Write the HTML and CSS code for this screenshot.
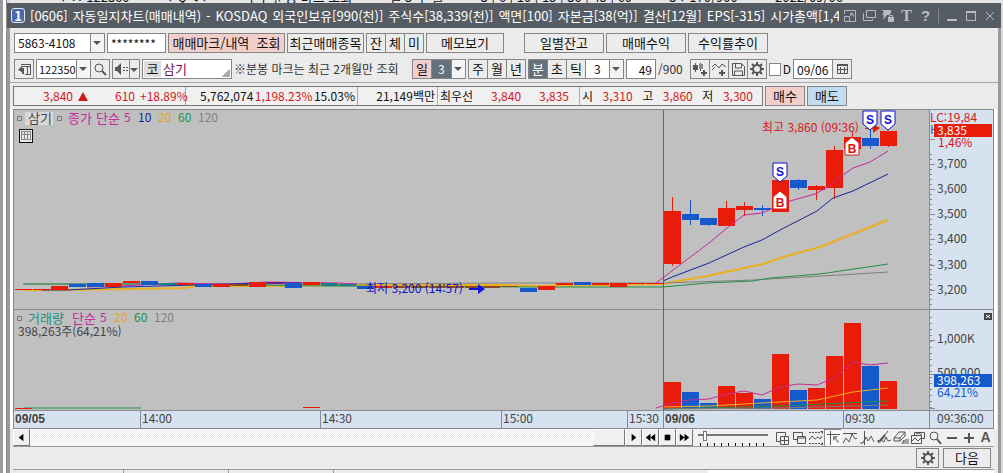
FILE: index.html
```html
<!DOCTYPE html>
<html lang="ko">
<head>
  <meta charset="UTF-8">
  <meta name="viewport" content="width=device-width, initial-scale=1.0">
  <title>[0606] 자동일지차트</title>
  <link rel="stylesheet" href="styles.css">
</head>
<body>
  <div class="behind"><span>▾ ㅅ 122360</span><span>▾ Q ◂ ▾</span><span>ㅣㅣ 분봉 마크 조회</span><span>일 3 주 월</span><span>3 | 6 | 10 | 15 | 30 | 45 | 60</span><span>3 ▾ 170/900</span><span>2022/09/06</span></div>
  <div class="window">
    <header class="titlebar">
      <span class="app-no">1</span>
      <h1 class="title">
        <span>[0606]</span><span>자동일지차트(매매내역)</span><span>-</span><span>KOSDAQ</span><span>외국인보유[990(천)]</span><span>주식수[38,339(천)]</span><span>액면[100]</span><span>자본금[38(억)]</span><span>결산[12월]</span><span>EPS[-315]</span><span>시가총액[1,456(억)]</span>
      </h1>
      <div class="win-btns">
        <button aria-label="축소"><svg viewBox="0 0 16 16"><path d="M2.5 6V2.5h11v11H8M2.5 8.5h5v5h-5zM8 8l3-3M8 5.5h3v3"/></svg></button>
        <button aria-label="복제"><svg viewBox="0 0 16 16"><path d="M5.5 2.5h9v7h-9zM3 5.5h-.5v7h9V11"/></svg></button>
        <button aria-label="잠금"><svg viewBox="0 0 16 16"><path class="fill" d="M2 2h9v3l-2 2H7l-4 5 1-5H2l2-3zM8 9h6v5H8z"/><path d="M9.5 9V7.5h3V9"/></svg></button>
        <button class="serif" aria-label="글꼴">T</button>
        <button class="help" aria-label="도움말">?</button>
        <i class="bar"></i>
        <button aria-label="최소화"><svg viewBox="0 0 16 16"><path class="thick" d="M3 12h10"/></svg></button>
        <button aria-label="최대화"><svg viewBox="0 0 16 16"><path d="M3.5 4.5h9v8h-9z"/><path class="thick" d="M3 4h10"/></svg></button>
        <button aria-label="닫기"><svg viewBox="0 0 16 16"><path d="M4 4l8 8M12 4l-8 8"/></svg></button>
      </div>
    </header>

    <main class="content">
      <div class="toolbar">
        <div class="row">
          <label class="combo account"><select aria-label="계좌번호"><option>5863-4108</option></select></label>
          <input class="box pass" type="text" value="********" aria-label="비밀번호">
          <button class="btn w-117 pink">매매마크/내역 &nbsp;조회</button>
          <button class="btn w-76">최근매매종목</button>
          <div class="group"><button class="btn">잔</button><button class="btn">체</button><button class="btn">미</button></div>
          <button class="btn w-78">메모보기</button>
          <button class="btn w-80 push">일별잔고</button>
          <button class="btn w-80">매매수익</button>
          <button class="btn w-80">수익률추이</button>
        </div>
        <div class="row">
          <button class="btn" aria-label="종목창"><svg viewBox="0 0 16 16"><path d="M5 3.5h9.5v10H9M11.5 5v8M5 5.5h9"/><path class="fill" d="M2 9l4-4v2h2v6H6v-2z"/></svg></button>
          <div class="group">
            <label class="combo code"><select aria-label="종목코드"><option>122350</option></select></label>
            <button class="btn" aria-label="검색"><svg viewBox="0 0 16 16"><circle cx="7" cy="7" r="4"/><path class="thick" d="M10 10l4 4"/></svg></button>
          </div>
          <div class="group">
            <button class="btn w-18" aria-label="소리"><svg viewBox="0 0 16 16"><path class="fill" d="M2 6h2l4-4v12l-4-4H2z"/><path stroke-dasharray="2 1" d="M10 6.5h5M10 9.5h5"/></svg></button>
            <button class="btn w-11 drop" aria-label="소리 설정"></button>
          </div>
          <div class="name-box"><span class="market">코</span><input type="text" value="삼기" aria-label="종목명"></div>
          <span class="note">※분봉 마크는 최근 2개월만 조회</span>
          <div class="group">
            <button class="btn pink">일</button>
            <label class="combo day"><select aria-label="일수"><option>3</option></select></label>
          </div>
          <div class="group"><button class="btn">주</button><button class="btn">월</button><button class="btn">년</button></div>
          <div class="group">
            <button class="btn dark">분</button><button class="btn">초</button><button class="btn">틱</button>
            <label class="combo min"><select aria-label="분 단위"><option>3</option></select></label>
          </div>
          <input class="box count" type="text" value="49" aria-label="봉 개수">
          <span class="total">/900</span>
          <div class="group">
            <button class="btn" aria-label="차트 추가"><svg viewBox="0 0 16 16"><path d="M3.5 2v9M8.5 2v8"/><path class="fill" d="M1 4h5v5H1z"/><path class="fill soft" d="M7 3h4v5H7z"/><path class="thick" d="M9 12h6M12 9v6"/></svg></button><button class="btn" aria-label="지표 추가"><svg viewBox="0 0 16 16"><path d="M1 6l3-3 4 4 3-4 4 3M1 9l3-3"/><path class="thick" d="M8 12h6M11 9v6"/></svg></button><button class="btn" aria-label="저장"><svg viewBox="0 0 16 16"><path d="M2.5 2.5h9l3 3v9h-12zM5.5 3v4h6V3M4.5 14v-4h8v4"/></svg></button><button class="btn" aria-label="설정"><svg viewBox="0 0 16 16"><circle class="thick" cx="8" cy="8" r="4"/><path class="cog" d="M8 1v3M8 12v3M1 8h3M12 8h3M3 3l2 2M11 11l2 2M13 3l-2 2M5 11l-2 2"/></svg></button>
          </div>
          <label class="check"><input type="checkbox">D</label>
          <div class="group">
            <input class="box date" type="text" value="09/06" aria-label="날짜">
            <button class="btn" aria-label="달력"><svg viewBox="0 0 16 16"><path d="M3.5 4.5h10v8h-10zM3 8.5h11M6.5 6v7M10.5 6v7"/><path class="thick" d="M3 4h11"/></svg></button>
          </div>
        </div>
      </div>

      <div class="quote">
        <div class="cells">
          <div class="cell c1"><b>3,840</b><i class="up"></i><b>610</b><b>+18.89%</b></div>
          <div class="cell c2"><span>5,762,074</span><b>1,198.23%</b><span>15.03%</span></div>
          <div class="cell c3"><span>21,149백만</span></div>
          <div class="cell c4"><span>최우선</span><b>3,840</b><b>3,835</b></div>
          <div class="cell c5"><span>시</span><b>3,310</b><span>고</span><b>3,860</b><span>저</span><b>3,300</b></div>
        </div>
        <button class="btn w-40 pink">매수</button>
        <button class="btn w-40 blue">매도</button>
      </div>

      <section class="chart">
        <svg id="chart" viewBox="14 110 979 318">
          <rect class="pane" x="14" y="110" width="915" height="300"/>
          <rect class="axis" x="929" y="110" width="64" height="318"/>
          <rect class="axis" x="14" y="411" width="979" height="17"/>
          <g id="bars"></g>
          <path class="rule" d="M14 309.5H993M14 410.5H993M929.5 110V428M140.5 411V428M320.5 411V428M501.5 411V428M627.5 411V428M663.5 411V428M843.5 411V428"/>
          <g id="lines"></g>
          <rect class="day-line" x="663" y="110" width="1" height="300"/>
          <g id="ticks"></g>

          <g class="legend">
            <path class="handle" d="M17.5 116.5h4v4h-4zM57.5 116.5h4v4h-4zM17.5 316.5h4v4h-4z"/>
            <rect class="name-bg" x="25" y="112" width="28" height="13"/>
            <text class="word" x="28" y="123">삼기</text>
            <text class="word ma5" x="68" y="123">종가</text>
            <text class="word ma5" x="96" y="123">단순</text>
            <text class="ma5" x="124" y="122">5</text>
            <text class="ma10" x="138" y="122">10</text>
            <text class="ma20" x="158" y="122">20</text>
            <text class="ma60" x="178" y="122">60</text>
            <text class="ma120" x="198" y="122">120</text>
            <text class="word vol" x="28" y="323">거래량</text>
            <text class="word ma5" x="72" y="323">단순</text>
            <text class="ma5" x="100" y="322">5</text>
            <text class="ma20" x="114" y="322">20</text>
            <text class="ma60" x="134" y="322">60</text>
            <text class="ma120" x="154" y="322">120</text>
            <text x="18" y="336">398,263주(64,21%)</text>
          </g>
          <rect class="grid-icon" x="19" y="129" width="14" height="14"/>
          <rect class="grid-bg" x="20" y="130" width="12" height="12"/>
          <path class="grid-lines" d="M21 131.5h10M21 134.5h10M21 139.5h10M21.5 131v9M24.5 131v9M27.5 131v9M30.5 131v9"/>

          <text class="low" x="366" y="293">최저 3,200 (14:57)</text>
          <path class="low-arrow" d="M469 288h9v-4l7 5-7 5v-4h-9z"/>
          <text class="high" x="762" y="132">최고 3,860 (09:36)</text>
          <path class="high-arrow" d="M865 128h8v-4l7 4-7 5v-4h-8z"/>
          <g id="marks"></g>

          <g class="prices">
            <text x="937" y="168">3,700</text>
            <text x="937" y="193">3,600</text>
            <text x="937" y="218">3,500</text>
            <text x="937" y="243">3,400</text>
            <text x="937" y="269">3,300</text>
            <text x="937" y="294">3,200</text>
            <text x="937" y="343">1,000K</text>
            <text x="937" y="377">500,000</text>
            <text class="high" x="930" y="122">LC:19,84</text>
            <text class="blue-txt" x="930" y="134">H</text>
            <text class="high" x="938" y="147">1,46%</text>
            <text class="blue-txt" x="937" y="397">64,21%</text>
          </g>
          <rect class="up-bar" x="934" y="124" width="58" height="13"/>
          <text class="tag" x="937" y="135">3,835</text>
          <rect class="down-bar" x="934" y="374" width="58" height="13"/>
          <text class="tag" x="937" y="385">398,263</text>
          <rect class="close" x="984" y="313" width="8" height="7"/>
          <path class="close-x" d="M986 315l4 3M990 315l-4 3"/>

          <g class="times">
            <text class="bold" x="15" y="423">09/05</text>
            <text x="142" y="423">14:00</text>
            <text x="322" y="423">14:30</text>
            <text x="503" y="423">15:00</text>
            <text x="629" y="423">15:30</text>
            <text class="bold" x="665" y="423">09/06</text>
            <text x="845" y="423">09:30</text>
            <text x="937" y="423">09:36:00</text>
          </g>
        </svg>
      </section>

      <div class="player">
        <button class="key" aria-label="왼쪽"><svg viewBox="0 0 16 16"><path class="fill" d="M10 4v8L5 8z"/></svg></button>
        <div class="track"><div class="thumb"></div></div>
        <button class="key" aria-label="오른쪽"><svg viewBox="0 0 16 16"><path class="fill" d="M6 4v8l5-4z"/></svg></button>
        <button class="key" aria-label="뒤로"><svg viewBox="0 0 16 16"><path class="fill" d="M8 4v8L3 8zM13 4v8L8 8z"/></svg></button>
        <button class="key" aria-label="정지"><svg viewBox="0 0 16 16"><path class="fill" d="M5 5h6v6H5z"/></svg></button>
        <button class="key" aria-label="앞으로"><svg viewBox="0 0 16 16"><path class="fill" d="M3 4v8l5-4zM8 4v8l5-4z"/></svg></button>
        <input class="speed" type="range" min="0" max="100" value="7" aria-label="속도">
        <div class="tools">
          <button aria-label="창 추가"><svg viewBox="0 0 16 16"><path d="M7 11.5H2.5v-9h9V6M6.5 6.5h8v8h-8zM10.5 7v7M7 10.5h7"/></svg></button>
          <button aria-label="창 겹치기"><svg viewBox="0 0 16 16"><path d="M6 9.5H2.5v-7h9V6M6.5 6.5h8v7h-8zM7 8h7"/></svg></button>
          <button aria-label="구간"><svg viewBox="0 0 16 16"><path stroke-dasharray="2 1" d="M1 2.5h12M1 13.5h12"/><path d="M1 10l3-4 3 3 3-2 2 2 2-3"/><path class="fill" d="M12 1h3v3zM12 15h3v-3z"/></svg></button>
          <button class="on" aria-label="십자선"><svg viewBox="0 0 16 16"><path d="M2 4.5h13M5.5 1v14"/><path class="fill soft" d="M8 6h5l-2 2 3 4-1 1-3-4-2 2z"/></svg></button>
          <button aria-label="수평선"><svg viewBox="0 0 16 16"><path d="M1 3.5h14M1 13l3-5 3 4 3-8 3 5 2-1"/></svg></button>
          <button aria-label="수직선"><svg viewBox="0 0 16 16"><path d="M5.5 1v14M1 13h3l3-6 2 4 3-5 3 6"/></svg></button>
          <button aria-label="추세선"><svg viewBox="0 0 16 16"><path d="M2 13L12 1M1 11l4-1 3 2 2-5 2 4 3-1"/><path class="thick" d="M3 12l6-7"/></svg></button>
          <button aria-label="모두 지우기"><svg viewBox="0 0 16 16"><path d="M1 8l5-6h6l-5 6zM1 8v3h6V8M7 11l5-5V2M9 14l2-4v4M13 9v5M15 9v5"/></svg></button>
          <button aria-label="차트 겹치기"><svg viewBox="0 0 16 16"><path d="M4.5 5V2.5h10v6h-3M1.5 5.5h10v8h-10zM6 4l3-1 3 2M2 11l3-3 3 3 4-4"/></svg></button>
          <button aria-label="확대경"><svg viewBox="0 0 16 16"><circle cx="7" cy="6" r="4"/><path class="thick" d="M10 9l4 5"/></svg></button>
          <button aria-label="축소"><svg viewBox="0 0 16 16"><path class="thick" d="M3 8h10"/></svg></button>
          <button aria-label="확대"><svg viewBox="0 0 16 16"><path class="thick" d="M3 8h10M8 3v10"/></svg></button>
          <button class="auto">A</button>
        </div>
      </div>

      <footer class="footer">
        <button class="btn w-23" aria-label="환경설정"><svg viewBox="0 0 16 16"><circle class="thick" cx="8" cy="8" r="4"/><path class="cog" d="M8 1v3M8 12v3M1 8h3M12 8h3M3 3l2 2M11 11l2 2M13 3l-2 2M5 11l-2 2"/></svg></button>
        <button class="btn w-48">다음</button>
      </footer>
      <div class="tabs"><i></i><i></i><i></i><i class="wide"></i></div>
    </main>
  </div>

  <script>
    const NS = 'http://www.w3.org/2000/svg';

    function add(parent, tag, attrs, text) {
      const el = document.createElementNS(NS, tag);
      for (const key in attrs) el.setAttribute(key, attrs[key]);
      if (text) el.textContent = text;
      document.getElementById(parent).appendChild(el);
    }

    // direction, body top, body bottom, wick top, wick bottom, volume top
    const candles = [
      ['up', 211, 264, 197, 266, 382],
      ['down', 214, 220, 200, 225, 392],
      ['down', 218, 225, 218, 226, 403],
      ['up', 208, 226, 201, 226, 386],
      ['up', 206, 210, 202, 216, 393],
      ['down', 208, 210, 205, 216, 399],
      ['up', 180, 212, 178, 212, 354],
      ['down', 180, 188, 179, 190, 390],
      ['up', 186, 190, 185, 200, 388],
      ['up', 150, 188, 146, 199, 356],
      ['up', 137, 149, 132, 149, 323],
      ['down', 138, 146, 130, 149, 366],
      ['up', 131, 146, 131, 147, 381]
    ];
    candles.forEach(([dir, top, bottom, high, low, vol], i) => {
      const x = 664 + i * 18;
      add('bars', 'rect', { class: dir + '-bar', x: x + 8, y: high, width: 1, height: low - high });
      add('bars', 'rect', { class: dir + '-bar', x: x, y: top, width: 17, height: bottom - top });
      add('bars', 'rect', { class: dir + '-bar', x: x, y: vol, width: 17, height: 409 - vol });
    });

    // previous day: class, x, top, height
    const flat = [
      ['up', 15, 289, 1], ['up', 33, 289, 1], ['up', 51, 286, 4], ['down', 69, 284, 3],
      ['down', 87, 283, 4], ['up', 105, 283, 4], ['up', 123, 281, 2], ['down', 141, 281, 4],
      ['teal', 159, 283, 2], ['up', 177, 283, 2], ['down', 195, 284, 3], ['up', 213, 284, 3],
      ['brown', 231, 284, 2], ['up', 249, 282, 5], ['purple', 267, 282, 2], ['down', 285, 283, 5],
      ['up', 303, 282, 3], ['teal', 321, 283, 3], ['teal', 339, 284, 2], ['down', 357, 286, 3],
      ['up', 375, 286, 2], ['brown', 393, 286, 2], ['brown', 411, 286, 2], ['brown', 429, 286, 2],
      ['brown', 447, 286, 2], ['brown', 465, 286, 2], ['brown', 483, 286, 2], ['brown', 501, 286, 1],
      ['down', 520, 288, 4], ['up', 538, 286, 4], ['up', 556, 283, 2], ['down', 574, 282, 3],
      ['up', 592, 283, 2], ['up', 610, 283, 4], ['up', 628, 283, 1], ['up', 646, 283, 1],
      ['up', 15, 408, 1], ['up', 303, 407, 1]
    ];

    const lines = [
      ['ma20 bold-line', '25,290 60,290 130,289 185,288 195,286 260,286 357,285 500,285 540,286 663,284'],
      ['ma20 bold-line', '663,284 673,282 707,276 763,264 783,257 820,247 888,220'],
      ['ma120', '24,284 340,284 500,283 663,283 753,280 840,275 888,272'],
      ['ma60', '23,284 33,284 160,284 330,286 530,287 663,287 707,283 753,281 770,278 820,274 847,270 888,264'],
      ['ma5', '87,287 120,286 177,283 230,284 267,282 340,283 357,284'],
      ['ma10', '42,290 68,290 123,287 158,286 267,283 300,283'],
      ['ma5', '656,283 681,264 709,243 727,228 744,215 762,213 790,201 815,194 826,188 843,175 853,168 870,162 888,151'],
      ['ma10', '663,281 672,277 709,263 744,247 762,240 780,230 817,211 833,198 853,191 888,174'],
      ['ma5', '656,408 672,403 690,400 709,399 727,394 744,391 762,395 780,387 798,384 817,385 834,378 853,362 870,365 888,363'],
      ['ma20', '663,407 709,406 762,403 817,400 853,392 888,388'],
      ['ma60', '24,408 141,408'],
      ['ma60', '663,409 780,406 888,401'],
      ['ma120', '663,409 780,408 888,405']
    ];
    lines.forEach(([cls, points]) => add('lines', 'polyline', { class: cls + ' line', points: points }));
    flat.forEach(([dir, x, y, h]) => add('lines', 'rect', { class: dir + '-bar', x: x, y: y, width: 17, height: h }));
    add('lines', 'polyline', { class: 'ma20 line bold-line', points: '374,285 501,285' });

    for (let y = 154; y < 306; y += 5) add('ticks', 'rect', { x: 930, y: y, width: 2, height: 1 });
    for (let y = 317; y < 410; y += 6) add('ticks', 'rect', { x: 930, y: y, width: 2, height: 1 });
    [139, 164, 189, 214, 239, 265, 290, 340, 374, 408].forEach(y => add('ticks', 'rect', { x: 930, y: y, width: 5, height: 1 }));

    // trade marks: S hangs above the bar, B sits under it
    [[780, 163], [870, 111], [888, 111]].forEach(([x, y]) => {
      add('marks', 'path', { class: 'sell', d: `M${x - 7} ${y}h14v13l-7 6-7-6z` });
      add('marks', 'text', { class: 'sell-txt', x: x, y: y + 13 }, 'S');
    });
    [[780, 191], [852, 137]].forEach(([x, y]) => {
      add('marks', 'path', { class: 'buy', d: `M${x - 7} ${y + 6}l7-6 7 6v12h-14z` });
      add('marks', 'text', { class: 'buy-txt', x: x, y: y + 16 }, 'B');
    });
  </script>
</body>
</html>
```
FILE: styles.css
```css
* {
  box-sizing: border-box;
}
body {
  margin: 0;
  min-height: 100vh;
  display: flex;
  flex-direction: column;
  background: linear-gradient(90deg, #9c9c9c 3px, #fff 3px, #fff 6px, #8c8c8c 6px, #8c8c8c 7px, #d8d8d8 7px);
  font-family: "Noto Sans CJK KR", sans-serif;
  font-size: 13px;
  line-height: 16px;
  color: #111;
}
button, input, select {
  font: inherit;
  color: inherit;
  margin: 0;
}
input, select {
  font-size: 12px;
}
button {
  padding: 0;
  cursor: pointer;
}
svg {
  fill: none;
  stroke: #555;
}
button svg {
  display: block;
  width: 16px;
  height: 16px;
  margin: 0 auto;
}
.fill {
  fill: #555;
  stroke: none;
}
.soft {
  fill: #888;
}
.thick {
  stroke-width: 2;
}
.cog {
  stroke-width: 2;
}

/* window behind */
.behind {
  height: 3px;
  margin-left: 10px;
  display: flex;
  justify-content: space-between;
  align-items: flex-end;
  overflow: hidden;
  background: #e6e6e6;
  line-height: 12px;
  padding: 0 160px 0 50px;
  white-space: nowrap;
}

.window {
  flex: 1;
  display: flex;
  flex-direction: column;
  margin: 0 2px 0 7px;
}
.titlebar {
  height: 25px;
  display: flex;
  align-items: center;
  background: #565c64;
  color: #fff;
  padding: 0 3px 0 4px;
}
.app-no {
  width: 14px;
  height: 15px;
  margin-right: 5px;
  border: 1px solid #dfe6f5;
  border-radius: 3px;
  background: #4a68b0;
  text-align: center;
  font-weight: bold;
  line-height: 13px;
}
.title {
  flex: 1;
  min-width: 0;
  display: flex;
  gap: 5px;
  margin: 0;
  overflow: hidden;
  white-space: nowrap;
  font-size: 13px;
  font-weight: normal;
}
.title span {
  flex: none;
}
.win-btns {
  flex: none;
  display: flex;
  align-items: center;
  gap: 2px;
  padding-left: 2px;
}
.win-btns button {
  width: 17px;
  height: 18px;
  border: none;
  background: none;
  color: #b8bcc2;
}
.win-btns svg {
  stroke: #b8bcc2;
}
.win-btns .fill {
  fill: #b8bcc2;
}
.win-btns .serif {
  font: bold 16px/18px "Liberation Serif", serif;
}
.win-btns .help {
  font: bold 15px/18px "Liberation Sans", sans-serif;
}
.bar {
  width: 1px;
  height: 14px;
  margin: 0 2px;
  background: #858b93;
}

.content {
  flex: 1;
  display: flex;
  flex-direction: column;
  border: solid #9a9a9a;
  border-width: 0 3px;
  background: #ebebeb;
}
.toolbar {
  display: flex;
  flex-direction: column;
  gap: 6px;
  padding: 5px 4px 3px;
  border-bottom: 1px solid #a8a8a8;
}
.row {
  display: flex;
  align-items: center;
  gap: 2px;
  height: 20px;
}
.row > * {
  flex: none;
}
.btn {
  flex: none;
  width: 20px;
  height: 20px;
  border: 1px solid #858585;
  background: #ececec;
  line-height: 16px;
  white-space: nowrap;
}
.group {
  display: flex;
}
.group > * + * {
  margin-left: -1px;
}
.w-11 { width: 11px; }
.w-18 { width: 18px; }
.w-23 { width: 23px; }
.w-40 { width: 40px; }
.w-48 { width: 48px; }
.w-76 { width: 77px; }
.w-78 { width: 78px; }
.w-80 { width: 80px; }
.w-117 { width: 117px; }
.push {
  margin-left: 18px;
}
.pink {
  background: #f3cfcb;
}
.blue {
  background: #c3dcf3;
}
.dark {
  background: #64707c;
  color: #fff;
}
.box {
  height: 20px;
  border: 1px solid #858585;
  background: #fff;
  padding: 0 3px;
  outline: none;
}
.combo {
  position: relative;
  display: block;
}
.combo select {
  appearance: none;
  display: block;
  width: 100%;
  height: 20px;
  padding: 0 14px 0 3px;
  border: 1px solid #858585;
  border-radius: 0;
  background:
    linear-gradient(#858585, #858585) right 13px top / 1px 100% no-repeat,
    linear-gradient(#f4f4f4, #f4f4f4) right top / 13px 100% no-repeat,
    #fff;
  outline: none;
}
.combo::after, .drop::after {
  content: "";
  position: absolute;
  right: 4px;
  top: 8px;
  border: solid transparent;
  border-width: 4px 4px 0;
  border-top-color: #555;
  pointer-events: none;
}
.drop {
  position: relative;
}
.drop::after {
  right: 1px;
}
.account { width: 91px; }
.code { width: 55px; }
.code select {
  font-size: 11px;
  padding-left: 2px;
}
.day { width: 35px; }
.min { width: 39px; }
.day select {
  background-color: #64707c;
  color: #fff;
  padding-left: 6px;
}
.min select {
  padding-left: 8px;
}
.pass {
  width: 59px;
}
.name-box {
  width: 90px;
  height: 20px;
  display: flex;
  align-items: center;
  border: 1px solid #858585;
  background: linear-gradient(135deg, transparent 50%, #aaa 50%) right 1px bottom 1px / 8px 8px no-repeat #fff;
}
.name-box input {
  width: 60px;
  border: none;
  padding: 0 2px;
  background: none;
  color: #7a1050;
  font-size: 13px;
  outline: none;
}
.market {
  width: 17px;
  margin-left: 1px;
  background: #ddd;
  text-align: center;
}
.note {
  width: 176px;
  font-size: 12px;
  color: #333;
  white-space: nowrap;
}
.count {
  width: 30px;
  text-align: right;
}
.total {
  width: 30px;
  font-size: 12px;
  color: #333;
}
.check {
  display: flex;
  align-items: center;
  gap: 2px;
  width: 22px;
  font-size: 12px;
}
.check input {
  appearance: none;
  width: 13px;
  height: 13px;
  border: 1px solid #858585;
  background: #fff;
}
.date {
  width: 40px;
}

.quote {
  display: flex;
  gap: 2px;
  padding: 3px 3px;
}
.cells {
  display: flex;
  width: 750px;
  height: 20px;
  border: 1px solid #777;
  background: #f0f0f0;
  font-size: 12px;
}
.cell {
  display: flex;
  align-items: center;
  justify-content: space-between;
  border-right: 1px solid #aaa;
  padding: 0 2px;
  white-space: nowrap;
}
.cell:last-child {
  border: none;
}
.cell b {
  font-weight: normal;
  color: #d01818;
}
.c1 { width: 172px; padding-left: 29px; gap: 5px; }
.c1 .up { margin-right: 22px; }
.c2 { width: 172px; padding-left: 14px; }
.c3 { width: 80px; justify-content: flex-end; }
.c4 { width: 142px; padding-right: 10px; }
.c5 { flex: 1; padding-right: 9px; }
.up {
  border: solid transparent;
  border-width: 0 5px 9px;
  border-bottom-color: #d01818;
}

.chart {
  margin: 0 4px 0 3px;
  border: 1px solid #888;
  outline: 3px solid #fff;
  clip-path: inset(0 -4px 0 -3px);
}
.chart svg {
  display: block;
  width: 100%;
  height: auto;
  stroke: none;
}
.chart text {
  fill: #444;
  font-size: 12px;
}
.chart text.word {
  font-size: 13px;
}
.chart rect {
  shape-rendering: crispEdges;
}
.pane { fill: #c0c0c0; }
.axis { fill: #d6e2f0; }
.rule {
  stroke: #888c90;
}
.day-line {
  fill: #e03028;
}
#ticks {
  fill: #888c90;
}
.up-bar { fill: #e81c08; }
.down-bar { fill: #145acc; }
.teal-bar { fill: #1c8088; }
.brown-bar { fill: #8a4a20; }
.purple-bar { fill: #6c2080; }
.line {
  fill: none;
}
.line.ma5 { stroke: #c8289c; }
.line.ma10 { stroke: #14289c; }
.line.ma20 { stroke: #eab020; }
.line.ma60 { stroke: #209048; }
.line.ma120 { stroke: #808080; }
.bold-line {
  stroke-width: 2;
}
.name-bg {
  fill: #d8d8d8;
}
.handle {
  stroke: #777;
}
.chart text.ma5 { fill: #c8289c; }
.chart text.ma10 { fill: #14289c; }
.chart text.ma20 { fill: #e0a820; }
.chart text.ma60 { fill: #209048; }
.chart text.ma120 { fill: #808080; }
.chart text.vol { fill: #209088; }
.chart text.low { fill: #1010c8; }
.chart text.high { fill: #d81818; }
.chart text.blue-txt { fill: #1458c8; }
.chart text.tag { fill: #fff; }
.low-arrow { fill: #1010e0; }
.high-arrow { fill: #e81c08; }
.grid-icon {
  fill: #111;
}
.grid-bg {
  fill: #e8e8e8;
}
.grid-lines {
  stroke: #888;
}
.close { fill: #444; }
.close-x { stroke: #fff; }
.chart text.bold {
  font: bold 12px "Liberation Sans", sans-serif;
}
.sell {
  fill: #fff;
  stroke: #1010c8;
}
.buy {
  fill: #fff;
  stroke: #d81818;
}
.sell-txt, .buy-txt {
  font: bold 12px "Liberation Sans", sans-serif;
  text-anchor: middle;
}
.chart text.sell-txt { fill: #1010e0; }
.chart text.buy-txt { fill: #e01010; }

.player {
  display: flex;
  height: 18px;
  margin-left: 3px;
  margin-right: 4px;
  border-bottom: 1px solid #999;
  background: #f0f0f0;
}
.key {
  flex: none;
  width: 17px;
  height: 17px;
  border: 1px solid;
  border-color: #fff #777 #777 #fff;
  background: #f0f0f0;
}
.key svg {
  width: 15px;
  height: 15px;
}
.key .fill {
  fill: #000;
}
.track {
  flex: 1;
  display: flex;
  justify-content: flex-end;
  background: repeating-conic-gradient(#fff 0 25%, #ececec 0 50%) 0 0 / 2px 2px;
}
.thumb {
  width: 32px;
  border: 1px solid;
  border-color: #fff #777 #777 #fff;
  background: #f0f0f0;
}
.speed {
  flex: none;
  appearance: none;
  width: 70px;
  height: 17px;
  margin: 0 5px;
  background:
    linear-gradient(#777, #777) 0 5px / 100% 2px no-repeat,
    repeating-linear-gradient(90deg, transparent 0 2px, #111 2px 3px, transparent 3px 7px) 0 100% / 100% 3px no-repeat;
}
.speed::-webkit-slider-thumb {
  appearance: none;
  width: 4px;
  height: 10px;
  margin-top: -4px;
  border: 1px solid #777;
  background: #fff;
}
.tools {
  flex: none;
  display: flex;
}
.tools button {
  width: 17px;
  height: 17px;
  border: none;
  background: none;
}
.tools svg {
  width: 16px;
  height: 16px;
}
.tools .on {
  border: solid #888;
  border-width: 1px 0 0 1px;
  background: #fafafa;
}
.tools .auto {
  font: bold 14px/17px "Liberation Sans", sans-serif;
  color: #555;
}

.footer {
  display: flex;
  justify-content: flex-end;
  gap: 4px;
  padding: 1px 3px 1px 0;
  margin-right: 4px;
  height: 22px;
}
.tabs {
  flex: 1;
  display: flex;
  min-height: 4px;
  margin: 0 4px 0 3px;
  border-top: 1px solid #999;
}
.tabs i {
  width: 105px;
  border-right: 1px solid #999;
}
.tabs i:first-child {
  width: 111px;
}
.tabs .wide {
  flex: 1;
  border: none;
  background: linear-gradient(90deg, #ebebeb 374px, #fff 374px);
}
```
